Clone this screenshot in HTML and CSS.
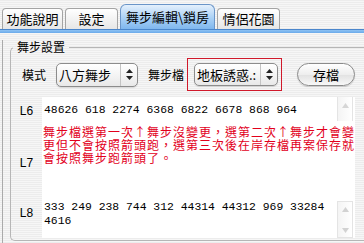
FILE: index.html
```html
<!DOCTYPE html>
<html lang="zh-Hant">
<head>
  <meta charset="UTF-8" />
  <title>舞步編輯</title>
  <link rel="stylesheet" href="styles.css">
</head>
<body>
  <div class="tabs">
    <div class="tab tab-help">功能說明</div>
    <div class="tab tab-setup">設定</div>
    <div class="tab tab-edit active">舞步編輯\鎖房</div>
    <div class="tab tab-garden">情侶花園</div>
  </div>
  <div class="tab-band"></div>

  <div class="panel">
    <fieldset class="group">
      <legend>舞步設置</legend>

      <div class="controls">
        <span class="mode-label">模式</span>
        <div class="popup popup-mode">
          <span class="popup-text">八方舞步</span>
          <span class="popup-arrows">
            <svg width="7" height="11" viewBox="0 0 7 11"><path d="M3.5 0 L7 4 L0 4 Z M0 7 L7 7 L3.5 11 Z" fill="#222"/></svg>
          </span>
        </div>
        <span class="file-label">舞步檔</span>
        <div class="highlight">
          <div class="popup popup-file">
            <span class="popup-text">地板誘惑.:</span>
            <span class="popup-arrows">
              <svg width="7" height="11" viewBox="0 0 7 11"><path d="M3.5 0 L7 4 L0 4 Z M0 7 L7 7 L3.5 11 Z" fill="#222"/></svg>
            </span>
          </div>
        </div>
        <button class="save">存檔</button>
      </div>

      <div class="list">
        <div class="row row-l6">
          <div class="row-label">L6</div>
          <div class="row-body">
            <div class="row-text steps">48626 618 2274 6368 6822 6678 868 964</div>
            <div class="scroll scroll-short">
              <svg width="9" height="7" viewBox="0 0 9 7"><path d="M4.5 1 L8 6 L1 6 Z" fill="#d6d6d6"/></svg>
            </div>
          </div>
        </div>
        <div class="row row-l7">
          <div class="row-label">L7</div>
          <div class="row-body">
            <div class="row-text note">
              <div>舞步檔選第一次↑舞步沒變更，選第二次↑舞步才會變</div>
              <div>更但不會按照箭頭跑，選第三次後在岸存檔再案保存就</div>
              <div>會按照舞步跑箭頭了。</div>
            </div>
          </div>
        </div>
        <div class="row row-l8">
          <div class="row-label">L8</div>
          <div class="row-body">
            <div class="row-text steps">333 249 238 744 312 44314 44312 969 33284 4616</div>
            <div class="scroll scroll-full">
              <svg width="9" height="7" viewBox="0 0 9 7"><path d="M4.5 1 L8 6 L1 6 Z" fill="#d2d2d2"/></svg>
              <svg width="9" height="7" viewBox="0 0 9 7"><path d="M1 1 L8 1 L4.5 6 Z" fill="#d2d2d2"/></svg>
            </div>
          </div>
        </div>
      </div>
    </fieldset>
  </div>
</body>
</html>
```

FILE: styles.css
```css
* {
  box-sizing: border-box;
}
body {
  margin: 0;
  width: 364px;
  height: 243px;
  overflow: hidden;
  font-family: "Noto Sans CJK TC", sans-serif;
  font-size: 12px;
  color: #000;
  background: repeating-linear-gradient(#ececec 0 1px, #f6f6f6 1px 2px);
}

/* tabs */
.tabs {
  display: flex;
  align-items: flex-end;
  gap: 2px;
  height: 29px;
  padding-left: 2px;
}
.tab {
  height: 21px;
  line-height: 20px;
  border: 1px solid #a4a4a4;
  border-bottom: none;
  border-radius: 4px 4px 0 0;
  background: linear-gradient(#ffffff, #e6e6e6);
  text-align: center;
  font-size: 13px;
}
.tab-help { width: 61px; }
.tab-setup { width: 53px; }
.tab-edit { width: 95px; }
.tab-garden { width: 63px; }
.tab.active {
  height: 25px;
  line-height: 24px;
  border-color: #6a95c8;
  border-radius: 6px 6px 0 0;
  background: linear-gradient(#e4f0fc, #a9d0f5 55%, #7fb7ee);
}
.tab-band {
  height: 4px;
  border-top: 1px solid #4a86cc;
  background: linear-gradient(#8fc3f3, #6aaaea);
}

/* group box */
.panel {
  margin-left: 2px;
  border-left: 1px solid #aaaaaa;
  height: 210px;
}
.group {
  margin: 7px 0 0 7px;
  padding: 0 0 2px 0;
  width: 354px;
  min-width: 0;
  border: 1px solid #b6b6b6;
  border-right: none;
  border-radius: 5px 0 0 5px;
}
.group legend {
  margin-left: 2px;
  padding: 0 4px;
  font-size: 12px;
  line-height: 14px;
}

/* controls row */
.controls {
  display: flex;
  align-items: center;
  height: 33px;
  margin-top: 4px;
  padding-left: 11px;
}
.mode-label {
  width: 24px;
  margin-right: 10px;
}
.popup {
  display: flex;
  align-items: stretch;
  height: 24px;
  border: 1px solid #8c8c8c;
  border-radius: 5px;
  background: linear-gradient(#ffffff, #f2f2f2 60%, #e8e8e8);
  box-shadow: 0 1px 1px rgba(0, 0, 0, 0.12);
}
.popup-text {
  flex: 1;
  padding-left: 2px;
  font-size: 13px;
  line-height: 21px;
  white-space: nowrap;
  overflow: hidden;
}
.popup-arrows {
  display: flex;
  align-items: center;
  justify-content: center;
  width: 17px;
  border-left: 1px solid #c4c4c4;
}
.popup-mode {
  width: 82px;
}
.file-label {
  width: 36px;
  margin-left: 10px;
}
.highlight {
  display: flex;
  align-items: center;
  width: 95px;
  height: 33px;
  margin-left: 3px;
  padding-left: 6px;
  border: 1.5px solid #d0192b;
}
.popup-file {
  width: 84px;
  height: 23px;
}
.save {
  width: 58px;
  height: 23px;
  margin-left: 15px;
  padding: 0;
  border: 1px solid #8a8a8a;
  border-radius: 12px;
  background: linear-gradient(#ffffff, #eeeeee 50%, #e2e2e2 52%, #f8f8f8);
  font-family: "Noto Sans CJK TC", sans-serif;
  font-size: 13px;
  color: #000;
  box-shadow: 0 1px 1px rgba(0, 0, 0, 0.15);
}

/* step rows */
.list {
  margin-top: 6px;
}
.row {
  display: flex;
}
.row-label {
  width: 31px;
  text-align: center;
  font-family: "Liberation Sans", sans-serif;
  font-size: 12px;
  line-height: 14px;
}
.row-body {
  display: flex;
  width: 313px;
  background: #ffffff;
}
.row-text {
  flex: 1;
}
.steps {
  padding: 3px 4px 0 2px;
  font-family: "Liberation Mono", monospace;
  font-size: 11.4px;
  line-height: 14px;
}
.note {
  padding: 4px 0 0 1px;
  font-size: 12px;
  letter-spacing: 1px;
  line-height: 13px;
  color: #e2001c;
  white-space: nowrap;
}
.note div {
  height: 13px;
}
.row-l6 { height: 24px; }
.row-l6 .row-label { padding-top: 7px; }
.row-l6 .steps { padding-top: 6px; }
.row-l7 { height: 76px; }
.row-l7 .row-label { padding-top: 35px; }
.row-l8 { height: 41px; }
.row-l8 .row-label { padding-top: 9px; }

.scroll {
  display: flex;
  flex-direction: column;
  align-items: center;
  width: 16px;
  margin-right: 2px;
  border-left: 1px solid #e4e4e4;
  border-right: 1px solid #e4e4e4;
  background: linear-gradient(90deg, #f4f4f4, #ffffff);
}
.scroll-short {
  padding-top: 5px;
}
.scroll-full {
  justify-content: space-between;
  margin-top: 4px;
  padding: 4px 0 3px;
  border-bottom: 1px solid #e4e4e4;
  border-top: 1px solid #e4e4e4;
}
```
